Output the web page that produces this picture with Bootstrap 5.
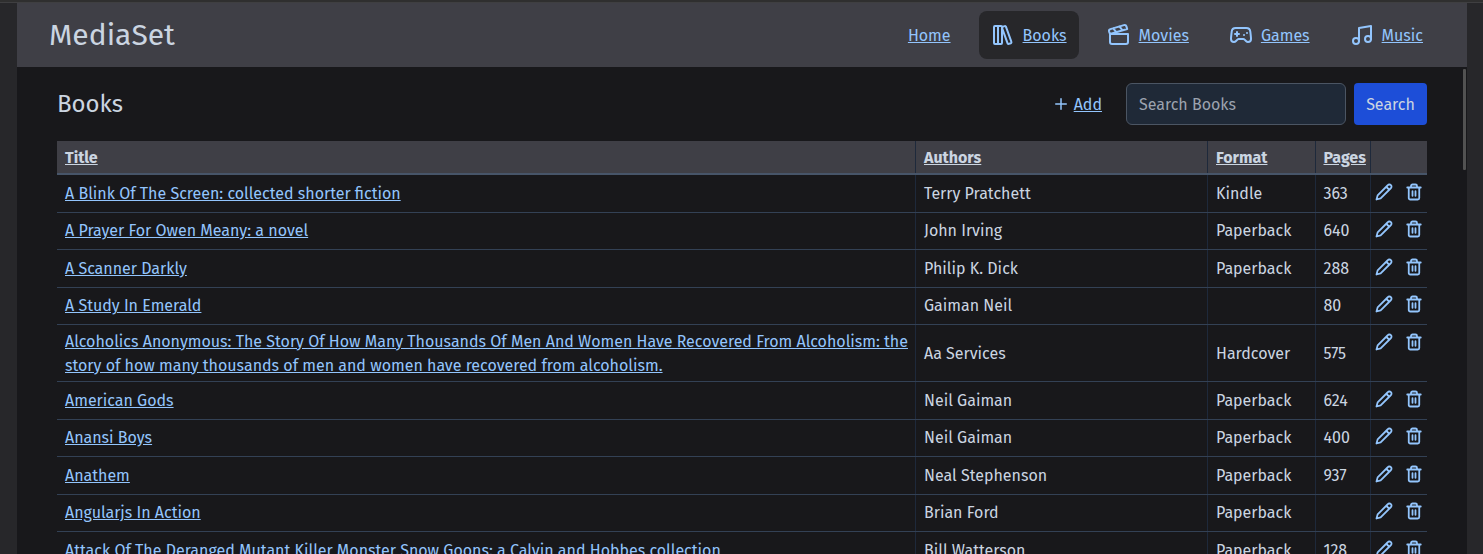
<!DOCTYPE html>
<html lang="en" data-bs-theme="dark">
<head>
<meta charset="utf-8">
<title>MediaSet</title>
<link href="https://cdn.jsdelivr.net/npm/bootstrap@5.3.0/dist/css/bootstrap.min.css" rel="stylesheet">
<style>
body{font:16px/24px "Fira Sans","Noto Sans",sans-serif;background:#27272a;color:#cbd5e1;height:554px;overflow:hidden}
a{color:#93c5fd}
.window-edge{height:3px;background:#2f2f2f;border-bottom:1px solid #3f3f41}
.app{margin:0 16px 0 17px;height:551px;background:#18181b}
.topbar{height:64px;background:#3f3f46;padding:0 32px}
.brand{font-size:30px;line-height:36px}
.tab{height:48px;padding:0 12px;border-radius:8px}
.tab.active{background:#27272a}
.tab a,.add-link a{padding-top:1px}
svg{fill:none;stroke:#93c5fd;stroke-width:2;stroke-linecap:round;stroke-linejoin:round;flex:none;display:block}
.content{padding:16px 40px 0;height:487px}
.page-title{font-size:24px;line-height:32px}
.search-box{width:220px;height:42px;background:#1f2937;border:1px solid #4b5563;border-radius:6px;padding:8px 12px}
.search-box::placeholder{color:#9ca3af;opacity:1}
.go{width:73px;height:42px;background:#1d4ed8;border:0;border-radius:4px;color:#cbd5e1;padding:1px 0 0}
.books{width:1370px;table-layout:fixed;border-collapse:collapse;margin-top:16px}
.books th{background:#3f3f46;height:33px;padding:1px 8px 0;border-bottom:2px solid #475569;text-decoration:underline;font-weight:700}
.books td{height:37.5px;padding:4.5px 8px 3.5px;border-bottom:1px solid #334155}
.books tbody tr:first-child td{height:38px}
.books td:first-child{padding-right:4px}
.books th+th,.books td+td{border-left:1px solid #1e293b}
.books td:last-child{padding:7.9px 4px 0;vertical-align:top}
.books svg{stroke-width:2.4}
.thumb{position:absolute;right:17px;top:69px;width:3px;height:101px;background:#525252;border-radius:1px}
</style>
</head>
<body>
<svg width="0" height="0" class="position-absolute">
<symbol id="library" viewBox="0 0 24 24"><rect width="8" height="18" x="3" y="3" rx="1"/><path d="M7 3v18M20.4 18.9c.2.5-.1 1.1-.6 1.3l-1.9.7c-.5.2-1.1-.1-1.3-.6L11.1 5.1c-.2-.5.1-1.1.6-1.3l1.9-.7c.5-.2 1.1.1 1.3.6Z"/></symbol>
<symbol id="clapper" viewBox="0 0 24 24"><path d="M20.2 6 3 11l-.9-2.4c-.3-1.1.3-2.2 1.3-2.5l13.5-4c1.1-.3 2.2.3 2.5 1.3ZM6.2 5.3l3.1 3.9M12.4 3.4l3.1 4M3 11h18v8a2 2 0 0 1-2 2H5a2 2 0 0 1-2-2Z"/></symbol>
<symbol id="gamepad" viewBox="0 0 24 24"><path d="M6 11h4M8 9v4M15 12h.01M18 10h.01M17.32 5H6.68a4 4 0 0 0-3.978 3.59c-.006.052-.01.101-.017.152C2.604 9.416 2 14.456 2 16a3 3 0 0 0 3 3c1 0 1.5-.5 2-1l1.414-1.414A2 2 0 0 1 9.828 16h4.344a2 2 0 0 1 1.414.586L17 18c.5.5 1 1 2 1a3 3 0 0 0 3-3c0-1.545-.604-6.584-.685-7.258-.007-.05-.011-.1-.017-.151A4 4 0 0 0 17.32 5z"/></symbol>
<symbol id="music" viewBox="0 0 24 24"><path d="M9 18V5l12-2v13"/><circle cx="6" cy="18" r="3"/><circle cx="18" cy="16" r="3"/></symbol>
<symbol id="plus" viewBox="0 0 24 24"><path d="M5 12h14M12 5v14"/></symbol>
<symbol id="pencil" viewBox="0 0 24 24"><path d="M17 3a2.85 2.83 0 1 1 4 4L7.5 20.5 2 22l1.5-5.5ZM15 5l4 4"/></symbol>
<symbol id="trash" viewBox="0 0 24 24"><path d="M3 6h18M19 6v14c0 1-1 2-2 2H7c-1 0-2-1-2-2V6M8 6V4c0-1 1-2 2-2h4c1 0 2 1 2 2v2M10 11v6M14 11v6"/></symbol>
</svg>
<div class="window-edge"></div>
<div class="app">
<header class="topbar d-flex align-items-center justify-content-between">
<div class="brand">MediaSet</div>
<nav class="d-flex gap-3">
<div class="tab d-flex align-items-center"><a href="#">Home</a></div>
<div class="tab active d-flex align-items-center gap-2"><svg width="24" height="24"><use href="#library"/></svg><a href="#">Books</a></div>
<div class="tab d-flex align-items-center gap-2"><svg width="24" height="24"><use href="#clapper"/></svg><a href="#">Movies</a></div>
<div class="tab d-flex align-items-center gap-2"><svg width="24" height="24"><use href="#gamepad"/></svg><a href="#">Games</a></div>
<div class="tab d-flex align-items-center gap-2"><svg width="24" height="24"><use href="#music"/></svg><a href="#">Music</a></div>
</nav>
</header>
<main class="content overflow-hidden">
<div class="d-flex align-items-center">
<div class="page-title me-auto">Books</div>
<div class="add-link d-flex align-items-center gap-1 me-4"><svg width="18" height="18"><use href="#plus"/></svg><a href="#">Add</a></div>
<input class="search-box me-2" placeholder="Search Books"><button class="btn go">Search</button>
</div>
<table class="books">
<colgroup><col style="width:858.5px"><col style="width:292px"><col style="width:107.5px"><col style="width:55px"><col></colgroup>
<thead><tr><th>Title</th><th>Authors</th><th>Format</th><th>Pages</th><th></th></tr></thead>
<tbody id="rows"></tbody>
</table>
</main>
</div>
<div class="thumb"></div>
<script>
const books=[
['A Blink Of The Screen: collected shorter fiction','Terry Pratchett','Kindle','363'],
['A Prayer For Owen Meany: a novel','John Irving','Paperback','640'],
['A Scanner Darkly','Philip K. Dick','Paperback','288'],
['A Study In Emerald','Gaiman Neil','','80'],
['Alcoholics Anonymous: The Story Of How Many Thousands Of Men And Women Have Recovered From Alcoholism: the story of how many thousands of men and women have recovered from alcoholism.','Aa Services','Hardcover','575'],
['American Gods','Neil Gaiman','Paperback','624'],
['Anansi Boys','Neil Gaiman','Paperback','400'],
['Anathem','Neal Stephenson','Paperback','937'],
['Angularjs In Action','Brian Ford','Paperback',''],
['Attack Of The Deranged Mutant Killer Monster Snow Goons: a Calvin and Hobbes collection','Bill Watterson','Paperback','128']];
document.getElementById('rows').innerHTML=books.map(b=>`<tr><td><a href="#">${b[0]}</a></td><td>${b[1]}</td><td>${b[2]}</td><td>${b[3]}</td><td><div class="d-flex" style="gap:12px"><svg width="18" height="18"><use href="#pencil"/></svg><svg width="18" height="18"><use href="#trash"/></svg></div></td></tr>`).join('');
</script>
<script src="https://cdn.jsdelivr.net/npm/bootstrap@5.3.0/dist/js/bootstrap.bundle.min.js"></script>
</body>
</html>
